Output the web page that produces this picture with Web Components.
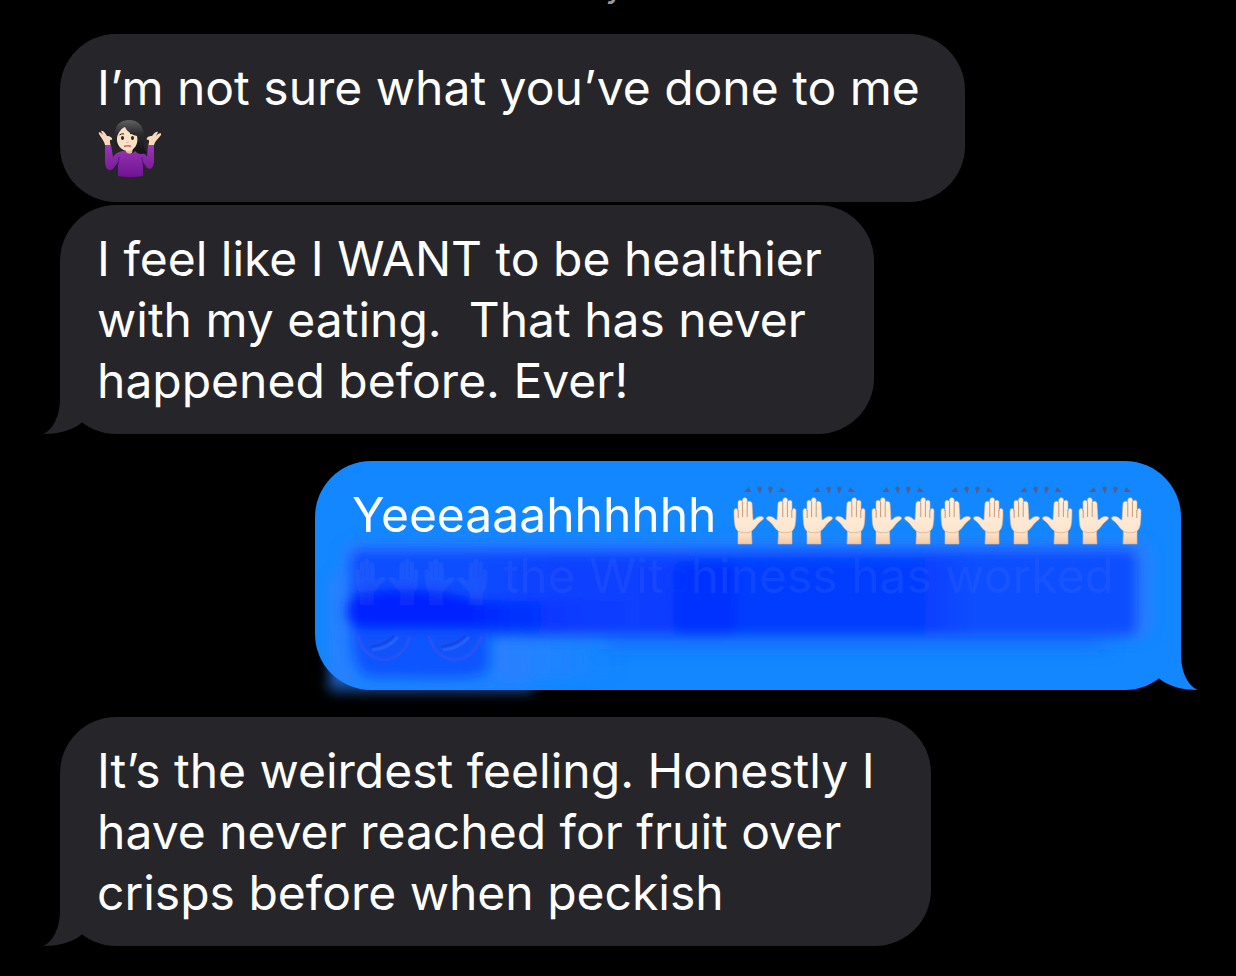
<!DOCTYPE html>
<html lang="en">
<head>
<meta charset="utf-8">
<meta name="viewport" content="width=device-width, initial-scale=1">
<title>Messages</title>
<style>
  body {
    margin: 0;
    background: #000;
    font-family: Inter, "Liberation Sans", sans-serif;
  }
</style>
</head>
<body>
<chat-thread>
  <chat-time>y</chat-time>
  <chat-bubble style="--width: 905px">I’m not sure what you’ve done to me<br><emoji-shrug></emoji-shrug></chat-bubble>
  <chat-bubble tail style="--width: 814px">I feel like I WANT to be healthier<br>with my eating.&nbsp; That has never<br>happened before. Ever!</chat-bubble>
  <chat-bubble tail sent style="--width: 866px"><marker-paint slot="paint"></marker-paint>Yeeeaaahhhhhh <emoji-hands></emoji-hands><emoji-hands></emoji-hands><emoji-hands></emoji-hands><emoji-hands></emoji-hands><emoji-hands></emoji-hands><emoji-hands></emoji-hands><br><faint-text><emoji-hands></emoji-hands><emoji-hands></emoji-hands> the Wit<span>c</span>hiness has worked</faint-text><br><emoji-ball></emoji-ball><emoji-ball></emoji-ball></chat-bubble>
  <chat-bubble tail style="--width: 871px">It’s the weirdest feeling. Honestly I<br>have never reached for fruit over<br>crisps before when peckish</chat-bubble>
</chat-thread>

<script>
class ChatThread extends HTMLElement {
  constructor() {
    super();
    this.attachShadow({ mode: 'open' });
    this.shadowRoot.innerHTML = `
      <style>
        :host {
          display: flex;
          flex-direction: column;
          gap: 27px;
          padding: 0 55px 30px 60px;
          overflow: hidden;
        }
        ::slotted(chat-bubble:not([tail])) { margin-bottom: -24px; }
        ::slotted(chat-time) { margin: -33px 0 0; }
      </style>
      <slot></slot>
    `;
  }
}

class ChatTime extends HTMLElement {
  constructor() {
    super();
    this.attachShadow({ mode: 'open' });
    this.shadowRoot.innerHTML = `
      <style>
        :host {
          display: block;
          padding-right: 12px;
          text-align: center;
          color: #98989f;
          font-size: 30px;
          font-weight: 500;
          line-height: 40px;
        }
      </style>
      <time><slot></slot></time>
    `;
  }
}

class ChatBubble extends HTMLElement {
  constructor() {
    super();
    this.attachShadow({ mode: 'open' });
    this.shadowRoot.innerHTML = `
      <style>
        :host {
          --fill: #26262a;
          display: block;
          position: relative;
          isolation: isolate;
          box-sizing: border-box;
          width: var(--width);
          max-width: 100%;
          padding: 23px 24px 23px 37px;
          border-radius: 56px;
          background: var(--fill);
          color: #fff;
          font-size: 48px;
          line-height: 61px;
        }
        :host([sent]) {
          --fill: #1287ff;
          align-self: flex-end;
        }
        .tail {
          display: none;
          position: absolute;
          left: -17px;
          bottom: 0;
          width: 60px;
          height: 60px;
          fill: var(--fill);
          z-index: -2;
        }
        :host([tail]) .tail { display: block; }
        :host([sent]) .tail {
          left: auto;
          right: -17px;
          transform: scaleX(-1);
        }
      </style>
      <svg class="tail" viewBox="0 0 60 60" aria-hidden="true">
        <path d="M17 0V25C17 42 10 56 0 60C14 60 27 57 37 50L60 30Z"/>
      </svg>
      <slot name="paint"></slot>
      <slot></slot>
    `;
  }
}

// text that is still just readable through the marker
class FaintText extends HTMLElement {
  constructor() {
    super();
    this.attachShadow({ mode: 'open' });
    this.shadowRoot.innerHTML = `
      <style>
        :host { color: rgba(50, 95, 255, 0.3); }
        ::slotted(emoji-hands) { opacity: 0.05; }
        ::slotted(span) { color: rgba(50, 95, 255, 0.06); }
      </style>
      <slot></slot>
    `;
  }
}

class MarkerPaint extends HTMLElement {
  constructor() {
    super();
    this.attachShadow({ mode: 'open' });
    this.shadowRoot.innerHTML = `
      <style>
        :host {
          position: absolute;
          inset: 0;
          z-index: -1;
        }
        svg {
          display: block;
          width: 100%;
          height: 100%;
          overflow: visible;
        }
      </style>
      <svg viewBox="0 0 866 229" preserveAspectRatio="none" aria-hidden="true">
        <defs>
          <linearGradient id="glow">
            <stop offset="0" stop-color="#2c80ff"/>
            <stop offset="1" stop-color="#2c80ff" stop-opacity="0"/>
          </linearGradient>
          <linearGradient id="stroke">
            <stop offset="0" stop-color="#0a44ff" stop-opacity="0"/>
            <stop offset=".15" stop-color="#0a42ff"/>
            <stop offset=".5" stop-color="#063cff"/>
            <stop offset=".9" stop-color="#063cff"/>
            <stop offset="1" stop-color="#063cff" stop-opacity="0"/>
          </linearGradient>
          <linearGradient id="dark">
            <stop offset="0" stop-color="#0020ff"/>
            <stop offset=".4" stop-color="#0020ff"/>
            <stop offset="1" stop-color="#0838ff" stop-opacity="0"/>
          </linearGradient>
          <filter id="soft" x="-20%" y="-40%" width="140%" height="180%"><feGaussianBlur stdDeviation="6"/></filter>
          <filter id="wide" x="-20%" y="-60%" width="140%" height="220%"><feGaussianBlur stdDeviation="9"/></filter>
        </defs>
        <g filter="url(#soft)">
          <rect x="12" y="212" width="208" height="20" rx="8" fill="#2c80ff" opacity=".5"/>
          <rect x="14" y="110" width="36" height="110" rx="14" fill="#2c80ff" opacity=".8"/>
          <rect x="28" y="80" width="808" height="98" rx="12" fill="#2a7fff"/>
          <rect x="176" y="176" width="130" height="42" rx="12" fill="url(#glow)"/>
        </g>
        <g filter="url(#wide)">
          <rect x="290" y="160" width="500" height="28" fill="#1474ff"/>
        </g>
        <g filter="url(#soft)">
          <rect x="36" y="89" width="786" height="86" rx="10" fill="#1050ff"/>
          <path d="M38 160H174V206C170 222 120 216 60 216C40 216 34 190 38 160Z" fill="#0a54ff"/>
          <rect x="140" y="98" width="520" height="74" fill="url(#stroke)"/>
          <rect x="358" y="100" width="64" height="74" rx="14" fill="#0030ff"/>
          <path d="M42 132C90 124 130 128 160 138C220 142 270 138 320 140V168H46C28 164 28 140 42 132Z" fill="url(#dark)"/>
        </g>
      </svg>
    `;
  }
}

class EmojiHands extends HTMLElement {
  constructor() {
    super();
    this.attachShadow({ mode: 'open' });
    this.shadowRoot.innerHTML = `
      <style>
        :host { display: inline-block; height: 61px; vertical-align: top; }
        svg { display: block; width: 69px; height: 61px; }
      </style>
      <svg viewBox="-2 1 69 61" role="img" aria-label="raising hands">
        <defs>
          <linearGradient id="skin" x1="0" y1="0" x2="0" y2="1">
            <stop offset="0" stop-color="#fff0df"/>
            <stop offset=".75" stop-color="#fce5ce"/>
            <stop offset="1" stop-color="#f3c8a2"/>
          </linearGradient>
          <g id="hand">
            <path d="M2 28C2 24.500 5.500 24.500 6 28V19.500C6 16.500 10 16.500 10.500 19.500V17C10.500 14 14.800 14 15.200 17V20.500C15.200 17.500 19.500 17.500 20 20.500L21 37C23 37 24.500 33.500 28 33.500C32.500 33.500 32.500 36 29 38C25 41 23 46 19.500 48L20 61H6V48C3 46 2 41 2 28Z"
              fill="url(#skin)" stroke="#e3b58f" stroke-width=".6"/>
            <path d="M6.200 27V35M10.600 19V34M15.200 20V34" fill="none" stroke="#c0916f" stroke-width=".9"/>
            <path d="M6.500 48.500Q13 51 19.500 48.500" fill="none" stroke="#e8bb94" stroke-width="1.200"/>
          </g>
        </defs>
        <g fill="#4d6090">
          <path d="M12 9L17 4L19 9Z"/>
          <path d="M25 5Q28 2 30 5L28 11Z"/>
          <path d="M36 5Q38 2 41 5L38 11Z"/>
          <path d="M47 9L49 4L54 9Z"/>
        </g>
        <use href="#hand"/>
        <use href="#hand" transform="translate(66 0) scale(-1 1)"/>
      </svg>
    `;
  }
}

class EmojiBall extends HTMLElement {
  constructor() {
    super();
    this.attachShadow({ mode: 'open' });
    this.shadowRoot.innerHTML = `
      <style>
        :host { display: inline-block; height: 61px; vertical-align: top; opacity: 0.3; }
        svg { display: block; width: 71px; height: 61px; }
      </style>
      <svg viewBox="0 0 71 61" fill="none" aria-hidden="true">
        <path d="M6 30Q12 52 32 54Q52 52 58 30" stroke="#8a4bc0" stroke-width="3" opacity=".7"/>
        <path d="M10 31Q16 49 32 50Q48 48 54 31Z" fill="#3a3fc0" opacity=".4"/>
        <path d="M20 44Q36 43 46 31" stroke="#5a7cff" stroke-width="3"/>
        <path d="M18 41Q34 38 42 30" stroke="#2a2890" stroke-width="2"/>
      </svg>
    `;
  }
}

class EmojiShrug extends HTMLElement {
  constructor() {
    super();
    this.attachShadow({ mode: 'open' });
    this.shadowRoot.innerHTML = `
      <style>
        :host { display: inline-block; height: 61px; vertical-align: top; }
        svg { display: block; width: 66px; height: 61px; }
      </style>
      <svg viewBox="0 3 66 61" role="img" aria-label="woman shrugging">
        <defs>
          <linearGradient id="top" x1="0" y1="0" x2="0" y2="1">
            <stop offset="0" stop-color="#9a38b4"/>
            <stop offset="1" stop-color="#701394"/>
          </linearGradient>
          <linearGradient id="hair" x1="0" y1="0" x2="0" y2="1">
            <stop offset="0" stop-color="#606062"/>
            <stop offset=".4" stop-color="#2c2c2e"/>
            <stop offset="1" stop-color="#111113"/>
          </linearGradient>
        </defs>
        <path d="M19 31C16 20 17 5 32 5C42 5 47 12 47 21C47 29 46 33 50 38C43 40 36 40 30 36Z" fill="url(#hair)"/>
        <path d="M8 30H14L16 42C20 36 26 36 29 36Q33 42 38 36C43 36 47 37 50 42L51 30H57V47C56 55 51 56 48 50L46 47V61Q34 63 21 61V47L16 54C12 57 8 54 8 46Z" fill="url(#top)"/>
        <path d="M21 50L22 42M46 50L45 42" stroke="#611080" stroke-width="1" fill="none"/>
        <path d="M39 20C42 28 40 33 49 38C44 40 39 39 37 34Z" fill="#18181a"/>
        <path d="M29 33H36L35 38Q32 40 29 37Z" fill="#eabf9c"/>
        <path d="M20 23C21 17 25 13 28 12C30 17 36 20 40 21C42 29 37 36 31 36C25 36 19 30 20 23Z" fill="#fae0c4"/>
        <path d="M8 30C7 26 5 24 2 19C1 16 4 17 6 20L4 16C6 15 8 18 10 21C13 21 16 23 15 25C12 24 13 27 13.500 30Z" fill="#f9d9ba"/>
        <path d="M57 30C58 26 61 24 64 20C65 17 61 18 59 21L61 17C58 16 57 19 55 21C52 21 49 22 50 25C53 24 52 27 51.500 30Z" fill="#f9d9ba"/>
        <ellipse cx="25.500" cy="23" rx="1.500" ry="2" fill="#2c211c"/>
        <ellipse cx="35.500" cy="23" rx="1.500" ry="2" fill="#2c211c"/>
        <path d="M22.500 20Q25 18 27 19M33 18.500Q36 18 38 20" fill="none" stroke="#2c211c" stroke-width="1"/>
        <path d="M29.500 27Q30.500 28 31.500 27" fill="none" stroke="#dba37f" stroke-width="1"/>
        <path d="M27 31.500Q31 30 34 31.500" fill="none" stroke="#c9686a" stroke-width="1.600"/>
      </svg>
    `;
  }
}

customElements.define('chat-thread', ChatThread);
customElements.define('chat-time', ChatTime);
customElements.define('chat-bubble', ChatBubble);
customElements.define('faint-text', FaintText);
customElements.define('marker-paint', MarkerPaint);
customElements.define('emoji-hands', EmojiHands);
customElements.define('emoji-ball', EmojiBall);
customElements.define('emoji-shrug', EmojiShrug);
</script>
</body>
</html>
